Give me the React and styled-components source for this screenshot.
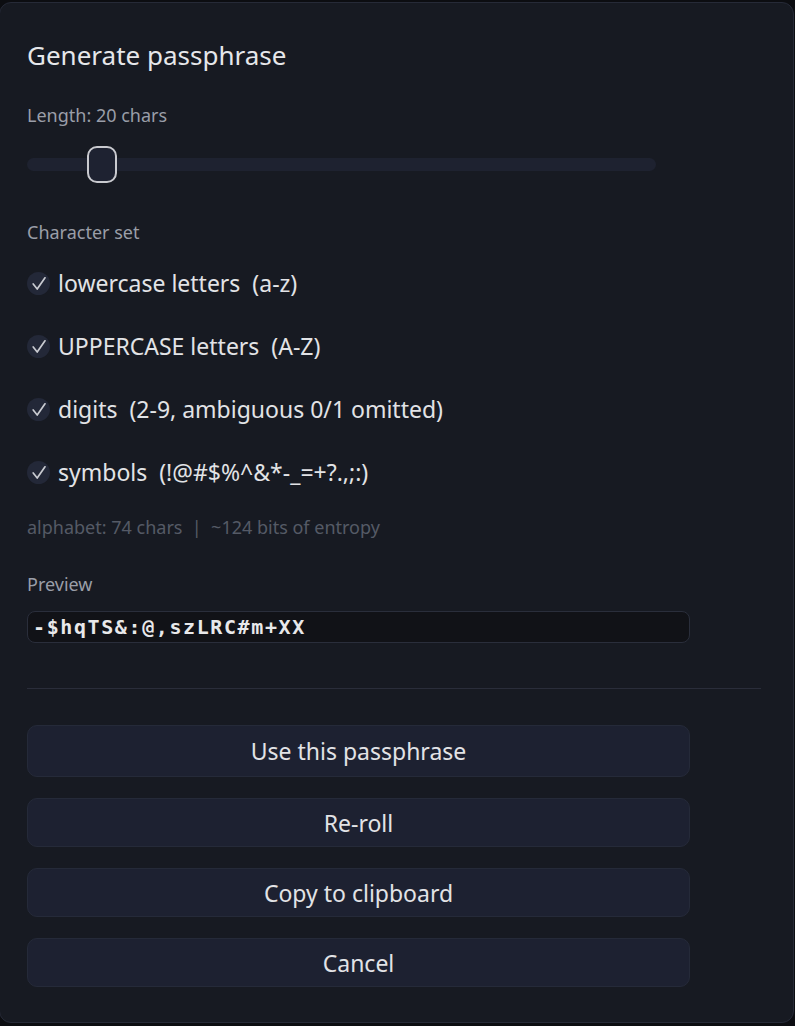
import React, { useState } from "react";
import styled, { createGlobalStyle } from "styled-components";

const GlobalStyle = createGlobalStyle`
  html, body {
    margin: 0;
    padding: 0;
    background: #0c0d11;
  }
  body {
    font-family: "Noto Sans", "DejaVu Sans", sans-serif;
    -webkit-font-smoothing: antialiased;
  }
`;

const Dialog = styled.div`
  box-sizing: border-box;
  width: 795px;
  height: 1021px;
  margin: 2px 0 0 -1px;
  padding: 0 27px;
  background: #171a22;
  border: 1px solid #262a37;
  border-radius: 12px;
  display: flex;
  flex-direction: column;
`;

const Title = styled.h2`
  margin: 37px 0 0;
  font-size: 26px;
  line-height: 30px;
  font-weight: 400;
  color: #e6e7ea;
`;

const Label = styled.div`
  margin-top: ${(p) => p.$gap}px;
  font-size: 18px;
  line-height: 22px;
  color: ${(p) => (p.$dim ? "#555a66" : "#9a9ea8")};
  white-space: pre;
`;

const SliderWrap = styled.div`
  position: relative;
  margin-top: 20px;
  width: 629px;
  height: 37px;
  display: flex;
  align-items: center;
`;

const Track = styled.div`
  width: 100%;
  height: 13px;
  border-radius: 7px;
  background: #1e2230;
`;

const Thumb = styled.div`
  position: absolute;
  top: 0;
  box-sizing: border-box;
  width: 30px;
  height: 37px;
  border: 2px solid #c9cacf;
  border-radius: 10px;
  background: #1e2231;
`;

const CheckList = styled.div`
  margin-top: 25px;
  display: flex;
  flex-direction: column;
  gap: 33px;
`;

const CheckRow = styled.label`
  height: 30px;
  display: flex;
  align-items: center;
  gap: 8px;
  font-size: 23px;
  color: #e2e3e6;
  white-space: pre;
  cursor: pointer;
`;

const CheckDot = styled.span`
  width: 23px;
  height: 23px;
  border-radius: 50%;
  background: #232838;
  display: flex;
  align-items: center;
  justify-content: center;
  flex: none;
`;

const PreviewBox = styled.div`
  box-sizing: border-box;
  margin-top: 16px;
  width: 663px;
  height: 32px;
  padding: 0 5px;
  display: flex;
  align-items: center;
  background: #111217;
  border: 1px solid #2a2e3b;
  border-radius: 8px;
  font-family: "DejaVu Sans Mono", "Liberation Mono", monospace;
  font-weight: 700;
  font-size: 20px;
  letter-spacing: 1.6px;
  color: #e8e8ea;
`;

const Divider = styled.hr`
  margin: 45px 0 0;
  width: 734px;
  border: none;
  border-top: 1px solid #2a2d3a;
`;

const Buttons = styled.div`
  margin-top: 36px;
  display: flex;
  flex-direction: column;
  gap: 21px;
`;

const Button = styled.button`
  box-sizing: border-box;
  width: 663px;
  height: ${(p) => (p.$tall ? 52 : 49)}px;
  background: #1d2131;
  border: 1px solid #252a39;
  border-radius: 10px;
  font-family: inherit;
  font-size: 23px;
  color: #e2e3e6;
  cursor: pointer;
`;

const Check = () => (
  <svg width="16" height="15" viewBox="0 0 16 15" fill="none">
    <path d="M2.2 8 L6.2 13 L14 1.8" stroke="#c9cbd1" strokeWidth="1.7" strokeLinecap="round" strokeLinejoin="round" />
  </svg>
);

const sets = [
  "lowercase letters  (a-z)",
  "UPPERCASE letters  (A-Z)",
  "digits  (2-9, ambiguous 0/1 omitted)",
  "symbols  (!@#$%^&*-_=+?.,;:)",
];

export default function App() {
  const [length] = useState(20);
  const min = 8;
  const max = 128;
  const thumbLeft = ((length - min) / (max - min)) * (629 - 30);

  return (
    <>
      <GlobalStyle />
      <Dialog>
        <Title>Generate passphrase</Title>
        <Label $gap={34}>Length: {length} chars</Label>
        <SliderWrap>
          <Track />
          <Thumb style={{ left: thumbLeft }} />
        </SliderWrap>
        <Label $gap={38}>Character set</Label>
        <CheckList>
          {sets.map((s) => (
            <CheckRow key={s}>
              <CheckDot>
                <Check />
              </CheckDot>
              {s}
            </CheckRow>
          ))}
        </CheckList>
        <Label $gap={29} $dim>alphabet: 74 chars  |  ~124 bits of entropy</Label>
        <Label $gap={35}>Preview</Label>
        <PreviewBox>-$hqTS&amp;:@,szLRC#m+XX</PreviewBox>
        <Divider />
        <Buttons>
          <Button $tall>Use this passphrase</Button>
          <Button>Re-roll</Button>
          <Button>Copy to clipboard</Button>
          <Button>Cancel</Button>
        </Buttons>
      </Dialog>
    </>
  );
}
